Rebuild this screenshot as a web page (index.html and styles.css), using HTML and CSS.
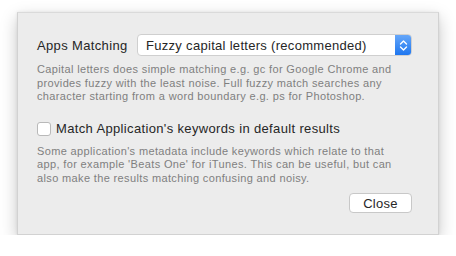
FILE: index.html
```html
<!DOCTYPE html>
<html>
<head>
<meta charset="utf-8">
<link rel="stylesheet" href="styles.css">
</head>
<body>
<div class="sheet">
  <div class="row">
    <span class="label">Apps Matching</span>
    <div class="popup">
      <span class="popup-text">Fuzzy capital letters (recommended)</span>
      <span class="popup-arrows">
        <svg width="9" height="13" viewBox="0 0 9 13"><path d="M1.5 5 L4.5 2 L7.5 5 M1.5 8 L4.5 11 L7.5 8" fill="none" stroke="#fff" stroke-width="1.4" stroke-linecap="round" stroke-linejoin="round"/></svg>
      </span>
    </div>
  </div>
  <p class="desc desc-first">Capital letters does simple matching e.g. gc for Google Chrome and<br>provides fuzzy with the least noise. Full fuzzy match searches any<br>character starting from a word boundary e.g. ps for Photoshop.</p>
  <label class="check-row">
    <span class="checkbox"></span>
    <span class="check-label">Match Application's keywords in default results</span>
  </label>
  <p class="desc desc-second">Some application's metadata include keywords which relate to that<br>app, for example 'Beats One' for iTunes. This can be useful, but can<br>also make the results matching confusing and noisy.</p>
  <div class="actions">
    <button class="btn">Close</button>
  </div>
</div>
</body>
</html>
```
FILE: styles.css
```css
html, body {
  margin: 0;
  background: #ffffff;
}
body {
  padding: 12px 17px 0 17px;
  font-family: "Liberation Sans", Arial, sans-serif;
  color: #262626;
}
.sheet {
  box-sizing: border-box;
  width: 422px;
  height: 223px;
  background: #ececec;
  border: 1px solid #d2d2d2;
  border-top-color: #dadada;
  box-shadow: 0 6px 16px rgba(0,0,0,0.22), 0 0 3px rgba(0,0,0,0.08);
  padding: 21px 26px 0 19px;
  display: flex;
  flex-direction: column;
}
.row {
  display: flex;
  align-items: center;
  height: 22px;
}
.label {
  font-size: 13px;
  letter-spacing: 0.35px;
  width: 100px;
}
.popup {
  box-sizing: border-box;
  width: 275px;
  height: 22px;
  background: #fff;
  border: 1px solid #cfcfcf;
  border-radius: 4px;
  display: flex;
  align-items: center;
  overflow: hidden;
}
.popup-text {
  flex: 1;
  font-size: 13px;
  letter-spacing: 0.3px;
  padding-left: 8px;
}
.popup-arrows {
  width: 17px;
  height: 22px;
  background: linear-gradient(#69a9fa, #1b74ef);
  display: flex;
  align-items: center;
  justify-content: center;
  margin-right: -1px;
}
.desc {
  margin: 0;
  font-size: 11px;
  letter-spacing: 0.36px;
  line-height: 13.5px;
  color: #7f7f7f;
  white-space: nowrap;
}
.desc-first {
  margin-top: 7px;
}
.check-row {
  display: flex;
  align-items: center;
  margin-top: 17px;
  height: 16px;
}
.checkbox {
  box-sizing: border-box;
  width: 14px;
  height: 14px;
  background: #fff;
  border: 1px solid #b9b9b9;
  border-radius: 3px;
  margin-right: 5px;
}
.check-label {
  font-size: 13px;
  letter-spacing: 0.35px;
}
.desc-second {
  margin-top: 8px;
}
.actions {
  display: flex;
  justify-content: flex-end;
  margin-top: 8px;
}
.btn {
  box-sizing: border-box;
  width: 63px;
  height: 20px;
  background: #fff;
  border: 1px solid #c8c8c8;
  border-radius: 4px;
  font-family: "Liberation Sans", Arial, sans-serif;
  font-size: 13px;
  letter-spacing: 0.3px;
  color: #262626;
  padding: 0;
}
```
